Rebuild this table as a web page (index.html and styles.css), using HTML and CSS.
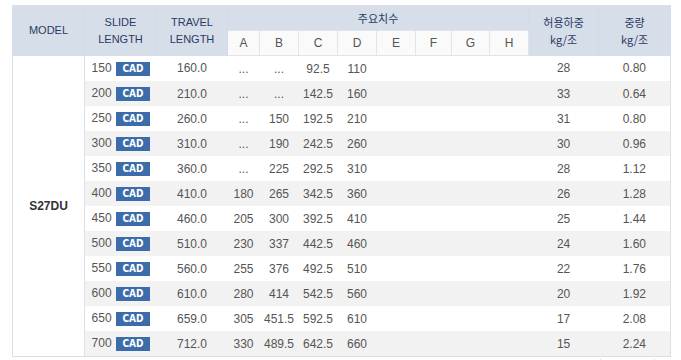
FILE: index.html
```html
<!DOCTYPE html>
<html>
<head>
    <title>S27DU</title>
    <link rel="stylesheet" href="styles.css">
</head>
<body>
    <div class="wrap">
        <table class="spec">
            <colgroup>
                <col class="c-model">
                <col class="c-slide">
                <col class="c-travel">
                <col class="c-a">
                <col class="c-dim">
                <col class="c-dim">
                <col class="c-dim">
                <col class="c-dim">
                <col class="c-f">
                <col class="c-g">
                <col class="c-dim">
                <col class="c-load">
                <col class="c-weight">
            </colgroup>
            <thead>
                <tr>
                    <th rowspan="2">MODEL</th>
                    <th rowspan="2">SLIDE<br>LENGTH</th>
                    <th rowspan="2">TRAVEL<br>LENGTH</th>
                    <th colspan="8" class="ko">주요치수</th>
                    <th rowspan="2" class="ko">허용하중<br>kg/조</th>
                    <th rowspan="2" class="ko">중량<br>kg/조</th>
                </tr>
                <tr class="sub">
                    <th>A</th><th>B</th><th>C</th><th>D</th>
                    <th>E</th><th>F</th><th>G</th><th>H</th>
                </tr>
            </thead>
            <tbody>
                <tr>
                    <td rowspan="12" class="model">S27DU</td>
                    <td>150 <span class="cad">CAD</span></td><td>160.0</td>
                    <td>...</td><td>...</td><td>92.5</td><td>110</td>
                    <td></td><td></td><td></td><td></td><td>28</td><td>0.80</td>
                </tr>
                <tr>
                    <td>200 <span class="cad">CAD</span></td><td>210.0</td>
                    <td>...</td><td>...</td><td>142.5</td><td>160</td>
                    <td></td><td></td><td></td><td></td><td>33</td><td>0.64</td>
                </tr>
                <tr>
                    <td>250 <span class="cad">CAD</span></td><td>260.0</td>
                    <td>...</td><td>150</td><td>192.5</td><td>210</td>
                    <td></td><td></td><td></td><td></td><td>31</td><td>0.80</td>
                </tr>
                <tr>
                    <td>300 <span class="cad">CAD</span></td><td>310.0</td>
                    <td>...</td><td>190</td><td>242.5</td><td>260</td>
                    <td></td><td></td><td></td><td></td><td>30</td><td>0.96</td>
                </tr>
                <tr>
                    <td>350 <span class="cad">CAD</span></td><td>360.0</td>
                    <td>...</td><td>225</td><td>292.5</td><td>310</td>
                    <td></td><td></td><td></td><td></td><td>28</td><td>1.12</td>
                </tr>
                <tr>
                    <td>400 <span class="cad">CAD</span></td><td>410.0</td>
                    <td>180</td><td>265</td><td>342.5</td><td>360</td>
                    <td></td><td></td><td></td><td></td><td>26</td><td>1.28</td>
                </tr>
                <tr>
                    <td>450 <span class="cad">CAD</span></td><td>460.0</td>
                    <td>205</td><td>300</td><td>392.5</td><td>410</td>
                    <td></td><td></td><td></td><td></td><td>25</td><td>1.44</td>
                </tr>
                <tr>
                    <td>500 <span class="cad">CAD</span></td><td>510.0</td>
                    <td>230</td><td>337</td><td>442.5</td><td>460</td>
                    <td></td><td></td><td></td><td></td><td>24</td><td>1.60</td>
                </tr>
                <tr>
                    <td>550 <span class="cad">CAD</span></td><td>560.0</td>
                    <td>255</td><td>376</td><td>492.5</td><td>510</td>
                    <td></td><td></td><td></td><td></td><td>22</td><td>1.76</td>
                </tr>
                <tr>
                    <td>600 <span class="cad">CAD</span></td><td>610.0</td>
                    <td>280</td><td>414</td><td>542.5</td><td>560</td>
                    <td></td><td></td><td></td><td></td><td>20</td><td>1.92</td>
                </tr>
                <tr>
                    <td>650 <span class="cad">CAD</span></td><td>659.0</td>
                    <td>305</td><td>451.5</td><td>592.5</td><td>610</td>
                    <td></td><td></td><td></td><td></td><td>17</td><td>2.08</td>
                </tr>
                <tr>
                    <td>700 <span class="cad">CAD</span></td><td>712.0</td>
                    <td>330</td><td>489.5</td><td>642.5</td><td>660</td>
                    <td></td><td></td><td></td><td></td><td>15</td><td>2.24</td>
                </tr>
            </tbody>
        </table>
        <div class="next">
            <span class="next-cell"></span>
        </div>
    </div>
</body>
</html>
```

FILE: styles.css
```css
body {
    margin: 0;
    font-family: "Liberation Sans", Arial, "Noto Sans CJK KR", sans-serif;
    background: #fff;
}
.wrap {
    padding: 5px 0 0 12px;
}
.spec {
    width: 658px;
    table-layout: fixed;
    border-collapse: collapse;
    border: 1px solid #dcdfe7;
}
.c-model { width: 72px; }
.c-slide { width: 72px; }
.c-travel { width: 71px; }
.c-a { width: 32px; }
.c-dim { width: 39px; }
.c-f { width: 36px; }
.c-g { width: 38px; }
.c-load { width: 70px; }
.c-weight { width: 72px; }
th {
    background: #d6deea;
    color: #2a3b5f;
    font-size: 11px;
    font-weight: normal;
    line-height: 17px;
    height: 24px;
    padding: 0;
    text-align: center;
    vertical-align: middle;
    border-right: 1px solid #d3dbe7;
}
th.ko {
    font-family: "Noto Sans CJK KR", "Liberation Sans", sans-serif;
    font-size: 11px;
    line-height: 17px;
}
.sub th {
    background: #fafafa;
    color: #555;
    font-size: 12px;
    border: 1px solid #e2e4e9;
}
td {
    height: 25px;
    padding: 0;
    font-size: 12px;
    color: #555;
    text-align: center;
    vertical-align: middle;
    white-space: nowrap;
}
tbody tr:nth-child(even) td {
    background: #f2f2f2;
}
td.model {
    background: #fff;
    color: #333;
    font-weight: bold;
    border-right: 1px solid #dcdfe7;
}
.cad {
    display: inline-block;
    width: 34px;
    height: 14px;
    line-height: 14px;
    margin-left: 1px;
    background: #3c6daa;
    color: #fff;
    font-family: "DejaVu Sans Condensed", "Liberation Sans", sans-serif;
    font-size: 10px;
    font-weight: bold;
    vertical-align: middle;
}
/* start of the next block, cut off by the window */
.next {
    display: flex;
    margin: 2px 0 0 588px;
    height: 10px;
}
.next-cell {
    width: 53px;
    border-left: 1px solid #dcdfe7;
    border-right: 1px solid #dcdfe7;
}
```
